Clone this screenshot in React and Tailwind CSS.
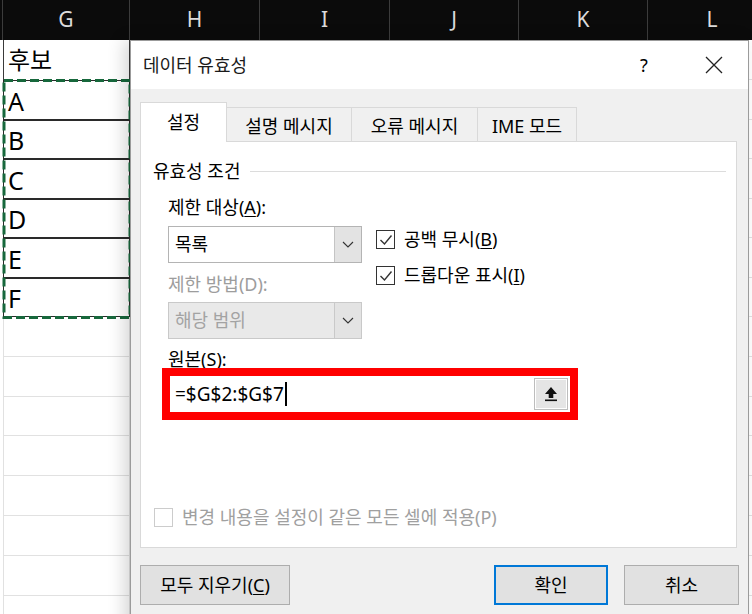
import React from "react";

const font = "font-['Noto_Sans','Noto_Sans_CJK_KR',sans-serif]";

function Chevron() {
  return (
    <svg width="12" height="7" viewBox="0 0 12 7" fill="none">
      <path d="M1 1 L6 6 L11 1" stroke="#333" strokeWidth="1.1" />
    </svg>
  );
}

function CheckBox({ checked, disabled }) {
  return (
    <div
      className={`w-[19px] h-[19px] flex-none flex items-center justify-center bg-white border ${
        disabled ? "border-[#cccccc]" : "border-[#333333] border-[1.5px]"
      }`}
    >
      {checked && (
        <svg width="14" height="12" viewBox="0 0 14 12" fill="none">
          <path d="M1.5 6 L5.5 10 L12.5 1.5" stroke="#333" strokeWidth="1.4" />
        </svg>
      )}
    </div>
  );
}

function Sheet() {
  const cols = [
    { n: "G", w: "w-[127px]" },
    { n: "H", w: "w-[130px]" },
    { n: "I", w: "w-[130px]" },
    { n: "J", w: "w-[129px]" },
    { n: "K", w: "w-[129px]" },
    { n: "L", w: "w-[129px]" },
  ];
  const data = ["A", "B", "C", "D", "E", "F"];

  return (
    <div className="flex flex-col">
      {/* column headers */}
      <div className="flex h-[40px] bg-[#0b0b0b] text-[21px] text-[#dcdcdc]">
        <div className="w-[3px] flex-none border-r border-[#3c3c3c]" />
        {cols.map((c) => (
          <div
            key={c.n}
            className={`${c.w} flex-none flex items-center justify-center border-r border-[#3c3c3c]`}
          >
            {c.n}
          </div>
        ))}
      </div>

      {/* header cell */}
      <div className="flex h-[40px]">
        <div className="w-[3px] flex-none" />
        <div className="w-[127px] flex-none flex items-center pl-[4px] text-[24px] text-black border-x border-[#3a3a3a]">
          후보
        </div>
        <div className="flex-1 border-b border-[#e1e1e1]" />
      </div>

      {/* list values */}
      {data.map((d) => (
        <div key={d} className="flex h-[39.5px]">
          <div className="w-[3px] flex-none" />
          <div className="w-[127px] flex-none flex items-center pl-[4px] pt-[3px] text-[25px] text-black border-x border-b border-t border-[#2a2a2a]">
            {d}
          </div>
          <div className="flex-1 border-b border-[#e1e1e1]" />
        </div>
      ))}

      {/* empty rows */}
      {[0, 1, 2, 3, 4, 5, 6, 7].map((i) => (
        <div key={i} className="flex h-[39.8px]">
          <div className="w-[3px] flex-none" />
          <div className="w-[127px] flex-none border-x border-b border-[#e1e1e1]" />
          <div className="flex-1 border-b border-[#e1e1e1]" />
        </div>
      ))}
    </div>
  );
}

function Dialog() {
  return (
    <div className="absolute left-[130px] top-[40px] w-[619px] h-[600px] flex flex-col bg-[#f0f0f0] border border-[#9b9b9b] shadow-[-6px_0_16px_rgba(0,0,0,0.16)] text-[18px] text-black">
      {/* title bar */}
      <div className="h-[48px] flex-none flex items-center bg-white pl-[12px] pr-[14px]">
        <span className="text-[#1a1a1a]">데이터 유효성</span>
        <div className="ml-auto flex items-center gap-[30px]">
          <div className="w-[40px] text-center text-[18px]">?</div>
          <div className="w-[40px] flex items-center justify-center">
            <svg width="18" height="18" viewBox="0 0 18 18" fill="none">
              <path d="M1 1 L17 17 M17 1 L1 17" stroke="#222" strokeWidth="1.3" />
            </svg>
          </div>
        </div>
      </div>

      {/* body */}
      <div className="flex-1 flex flex-col pl-[9px] pr-[11px] pt-[13px]">
        {/* tabs */}
        <div className="relative z-10 -mb-[1px] flex items-end h-[40px]">
          <div className="w-[87px] h-[40px] flex items-center justify-center bg-white border-x border-t border-[#d9d9d9]">
            설정
          </div>
          <div className="w-[125px] h-[34px] mb-[1px] flex items-center justify-center border-r border-t border-[#d9d9d9] pt-[3px]">
            설명 메시지
          </div>
          <div className="w-[126px] h-[34px] mb-[1px] flex items-center justify-center border-r border-t border-[#d9d9d9] pt-[3px]">
            오류 메시지
          </div>
          <div className="w-[99px] h-[34px] mb-[1px] flex items-center justify-center border-r border-t border-[#d9d9d9] pt-[3px]">
            IME 모드
          </div>
        </div>

        {/* panel */}
        <div className="h-[407px] flex-none flex flex-col bg-white border border-[#d9d9d9]">
          <div className="mt-[19px] h-[20px] flex items-center pl-[12px] pr-[10px]">
            <span className="leading-[20px]">유효성 조건</span>
            <div className="flex-1 ml-[10px] h-px bg-[#dcdcdc]" />
          </div>

          <div className="mt-[16px] flex pl-[27px]">
            <div className="w-[194px] flex flex-col">
              <div className="h-[20px] leading-[20px]">
                제한 대상(<span className="underline underline-offset-2">A</span>):
              </div>
              <div className="mt-[9px] h-[37px] flex border border-[#b4b4b4] bg-white">
                <div className="flex-1 flex items-center pl-[6px]">목록</div>
                <div className="w-[27px] flex items-center justify-center bg-[#e3e3e3] border-l border-[#c4c4c4]">
                  <Chevron />
                </div>
              </div>
              <div className="mt-[11px] h-[20px] leading-[20px] text-[#9d9d9d]">제한 방법(D):</div>
              <div className="mt-[8px] h-[37px] flex border border-[#c9c9c9] bg-[#e9e9e9]">
                <div className="flex-1 flex items-center pl-[6px] text-[#a3a3a3]">해당 범위</div>
                <div className="w-[27px] flex items-center justify-center bg-[#e3e3e3] border-l border-[#c9c9c9]">
                  <Chevron />
                </div>
              </div>
            </div>

            <div className="ml-[14px] pt-[33px] flex flex-col">
              <div className="h-[19px] flex items-center gap-[9px]">
                <CheckBox checked />
                <span>
                  공백 무시(<span className="underline underline-offset-2">B</span>)
                </span>
              </div>
              <div className="mt-[17px] h-[19px] flex items-center gap-[9px]">
                <CheckBox checked />
                <span>
                  드롭다운 표시(<span className="underline underline-offset-2">I</span>)
                </span>
              </div>
            </div>
          </div>

          <div className="mt-[11px] pl-[27px] h-[18px] leading-[18px]">
            원본(<span className="underline underline-offset-2">S</span>):
          </div>

          {/* highlighted source range */}
          <div className="ml-[21px] w-[416px] h-[52px] flex-none border-[8px] border-[#ff0000]">
            <div className="h-full flex items-center bg-white pl-[5px] pr-[2px]">
              <span className="text-[19px]">=$G$2:$G$7</span>
              <span className="ml-[1px] w-[2px] h-[24px] bg-black" />
              <div className="ml-auto w-[34px] h-[32px] flex items-center justify-center bg-[#e5e5e5] border border-[#bdbdbd] shadow-[inset_1px_1px_0_#ffffff,inset_-1px_-1px_0_#ffffff]">
                <svg width="14" height="16" viewBox="0 0 14 16">
                  <path d="M7 1 L13 8 H9.3 V12 H4.7 V8 H1 Z" fill="#111" />
                  <rect x="1" y="13.5" width="12" height="1.6" fill="#111" />
                </svg>
              </div>
            </div>
          </div>

          <div className="mt-[88px] pl-[13px] h-[19px] flex items-center gap-[9px]">
            <CheckBox disabled />
            <span className="text-[#a0a0a0]">변경 내용을 설정이 같은 모든 셀에 적용(P)</span>
          </div>
        </div>

        {/* buttons */}
        <div className="mt-[17px] -mr-[2px] h-[40px] flex">
          <div className="w-[150px] flex items-center justify-center bg-[#e1e1e1] border border-[#adadad]">
            모두 지우기(<span className="underline underline-offset-2">C</span>)
          </div>
          <div className="ml-auto w-[114px] flex items-center justify-center bg-[#e1e1e1] border-2 border-[#0078d7]">
            확인
          </div>
          <div className="ml-[16px] w-[115px] flex items-center justify-center bg-[#e1e1e1] border border-[#adadad]">
            취소
          </div>
        </div>
      </div>
    </div>
  );
}

export default function App() {
  return (
    <div className={`relative w-[752px] h-[614px] overflow-hidden bg-white ${font}`}>
      <Sheet />

      {/* copy marquee around A:F */}
      <svg className="absolute left-[2px] top-[79px]" width="130" height="240">
        <rect
          x="2"
          y="1.5"
          width="126"
          height="237"
          fill="none"
          stroke="#17683c"
          strokeWidth="3"
          strokeDasharray="9 4"
        />
      </svg>

      <Dialog />
    </div>
  );
}
